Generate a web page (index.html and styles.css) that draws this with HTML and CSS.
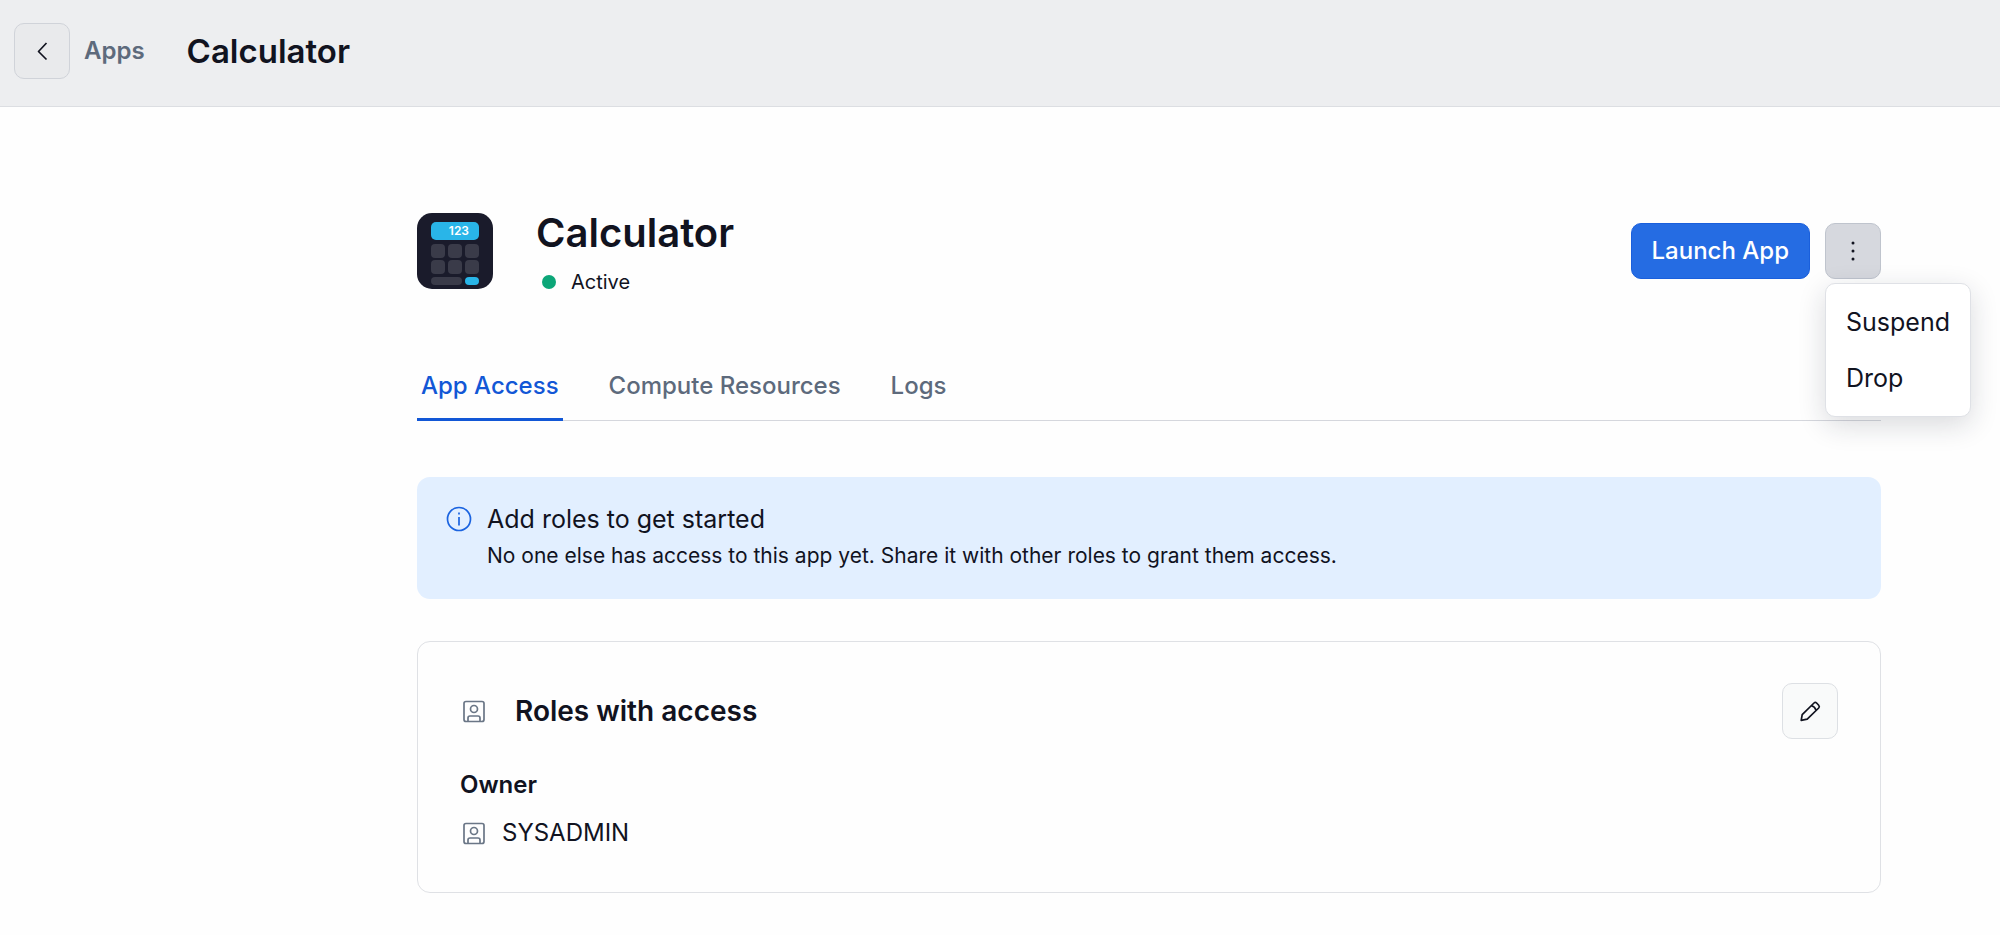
FILE: index.html
```html
<!DOCTYPE html>
<html lang="en">
<head>
    <meta charset="UTF-8">
    <meta name="viewport" content="width=device-width, initial-scale=1.0">
    <title>Calculator - Apps</title>
    <link rel="stylesheet" href="styles.css">
</head>
<body>

    <!-- Top bar -->
    <header class="topbar">
        <button type="button" class="icon-button back-button" aria-label="Back">
            <svg width="24" height="24" viewBox="0 0 24 24"><path d="M16.500 4L8.500 12.500L16.500 20.500" /></svg>
        </button>
        <a href="#" class="breadcrumb">Apps</a>
        <div class="topbar-title">Calculator</div>
    </header>

    <main class="content">

        <!-- App heading -->
        <section class="app-header">
            <svg class="app-logo" viewBox="0 0 76 76" aria-hidden="true">
                <rect width="76" height="76" rx="15" fill="#1a1b2b" />
                <rect x="14" y="9" width="48" height="18" rx="5" fill="#29b5e8" />
                <text x="52" y="22" text-anchor="end" class="logo-text">123</text>
                <g fill="#3a3b49">
                    <rect x="14" y="31" width="14" height="14" rx="4" />
                    <rect x="31" y="31" width="14" height="14" rx="4" />
                    <rect x="48" y="31" width="14" height="14" rx="4" />
                    <rect x="14" y="47" width="14" height="14" rx="4" />
                    <rect x="31" y="47" width="14" height="14" rx="4" />
                    <rect x="48" y="47" width="14" height="14" rx="4" />
                    <rect x="14" y="64" width="31" height="8" rx="4" />
                </g>
                <rect x="48" y="64" width="14" height="8" rx="4" fill="#29b5e8" />
            </svg>
            <div class="app-info">
                <h1>Calculator</h1>
                <p class="status"><span class="status-dot"></span>Active</p>
            </div>
            <div class="app-actions">
                <button type="button" class="launch-button">Launch App</button>
                <div class="menu-wrap">
                    <button type="button" class="icon-button more-button" aria-label="More options" aria-expanded="true">
                        <svg width="24" height="24" viewBox="0 0 24 24">
                            <circle cx="12" cy="4" r="1.500" />
                            <circle cx="12" cy="12" r="1.500" />
                            <circle cx="12" cy="20" r="1.500" />
                        </svg>
                    </button>
                    <div class="menu">
                        <button type="button">Suspend</button>
                        <button type="button">Drop</button>
                    </div>
                </div>
            </div>
        </section>

        <!-- Tabs -->
        <nav class="tabs">
            <a href="#access" class="active">App Access</a>
            <a href="#compute">Compute Resources</a>
            <a href="#logs">Logs</a>
        </nav>

        <!-- Info banner -->
        <section class="banner">
            <svg class="banner-icon" width="26" height="26" viewBox="0 0 26 26">
                <circle cx="13" cy="13" r="11.500" />
                <path d="M13 11V19.500M13 6.500V8.500" />
            </svg>
            <div>
                <h2>Add roles to get started</h2>
                <p>No one else has access to this app yet. Share it with other roles to grant them access.</p>
            </div>
        </section>

        <!-- Roles -->
        <section class="card">
            <div class="card-header">
                <svg class="role-icon" width="26" height="26" viewBox="0 0 26 26">
                    <rect x="4" y="3.500" width="20" height="20" rx="2" />
                    <circle cx="14" cy="11" r="3.500" />
                    <path d="M8 23.500V20Q8 18 10 18H18Q20 18 20 20V23.500" />
                </svg>
                <h2>Roles with access</h2>
                <button type="button" class="icon-button edit-button" aria-label="Edit roles">
                    <svg width="24" height="24" viewBox="0 0 24 24">
                        <path d="M3.200 21.300L4.200 15.600L16 4Q17.300 2.800 18.600 4L20.700 6.300Q21.900 7.700 20.700 9L9.200 20.200ZM13.400 6.600Q16.600 7.300 18.100 11.300" />
                    </svg>
                </button>
            </div>
            <h3>Owner</h3>
            <div class="role">
                <svg class="role-icon" width="26" height="26" viewBox="0 0 26 26">
                    <rect x="4" y="3.500" width="20" height="20" rx="2" />
                    <circle cx="14" cy="11" r="3.500" />
                    <path d="M8 23.500V20Q8 18 10 18H18Q20 18 20 20V23.500" />
                </svg>
                <span>SYSADMIN</span>
            </div>
        </section>

    </main>

</body>
</html>
```
FILE: styles.css
```css
* {
    box-sizing: border-box;
}

body {
    margin: 0;
    font-family: Inter, sans-serif;
    font-size: 24px;
    line-height: 32px;
    color: #11131f;
    background-color: #fefefe;
}

h1, h2, h3, p {
    margin: 0;
}

a {
    text-decoration: none;
}

button {
    font: inherit;
    color: inherit;
    cursor: pointer;
}

svg {
    display: block;
    flex-shrink: 0;
}

/* Top bar */
.topbar {
    display: flex;
    align-items: center;
    padding: 23px 14px 27px;
    background-color: #edeef0;
    border-bottom: 1px solid #dcdee2;
}

.icon-button {
    display: flex;
    align-items: center;
    justify-content: center;
    width: 56px;
    height: 56px;
    padding: 0;
    border: 1px solid #d0d3d9;
    border-radius: 10px;
}

.icon-button svg {
    fill: none;
    stroke: #11131f;
    stroke-width: 1.7;
    stroke-linejoin: round;
}

.back-button {
    background-color: #e9eaec;
}

.breadcrumb {
    margin-left: 14px;
    color: #5d6a7c;
    font-weight: 600;
}

.topbar-title {
    margin-left: 42px;
    font-size: 33px;
    font-weight: 600;
}

/* Content */
.content {
    margin: 96px 119px 42px 417px;
}

.app-header {
    display: flex;
    align-items: center;
}

.app-logo {
    width: 76px;
    height: 76px;
}

.logo-text {
    fill: #ffffff;
    font-size: 12px;
    font-weight: 600;
}

.app-info {
    margin-left: 43px;
    padding-top: 4px;
}

.app-info h1 {
    font-size: 40px;
    font-weight: 600;
    line-height: 52px;
}

.status {
    display: flex;
    align-items: center;
    margin-top: 7px;
    padding-left: 6px;
    font-size: 20px;
}

.status-dot {
    width: 14px;
    height: 14px;
    margin-right: 15px;
    border-radius: 50%;
    background-color: #0ca678;
}

.app-actions {
    display: flex;
    gap: 15px;
    margin-left: auto;
}

.launch-button {
    height: 56px;
    padding: 0 20px;
    border: 1px solid #1a5fdc;
    border-radius: 10px;
    background-color: #256ce3;
    color: #ffffff;
    font-weight: 500;
}

.menu-wrap {
    position: relative;
}

.more-button {
    background-color: #d6d8de;
    border-color: #bfc4cd;
}

.more-button svg {
    fill: #11131f;
    stroke: none;
}

.menu {
    position: absolute;
    top: 60px;
    left: 0;
    z-index: 1;
    padding: 10px 0;
    border: 1px solid #dfe1e6;
    border-radius: 10px;
    background-color: #ffffff;
    box-shadow: 0 8px 28px rgba(25, 30, 50, 0.16);
}

.menu button {
    display: block;
    width: 100%;
    height: 56px;
    padding: 0 20px;
    border: none;
    background: none;
    font-size: 25px;
    text-align: left;
}

/* Tabs */
.tabs {
    display: flex;
    gap: 42px;
    margin-top: 72px;
    border-bottom: 1px solid #d5d7dd;
}

.tabs a {
    margin-bottom: -1px;
    padding: 0 4px 16px;
    border-bottom: 3px solid transparent;
    color: #5d6a7c;
    font-weight: 500;
}

.tabs a.active {
    color: #1257d6;
    border-bottom-color: #1257d6;
}

/* Banner */
.banner {
    display: flex;
    gap: 15px;
    margin-top: 56px;
    padding: 26px 29px 27px;
    border-radius: 13px;
    background-color: #e2efff;
}

.banner-icon {
    margin-top: 3px;
    fill: none;
    stroke: #1a63e0;
    stroke-width: 1.7;
}

.banner h2 {
    font-size: 25px;
    font-weight: 400;
}

.banner p {
    margin-top: 5px;
    font-size: 21px;
}

/* Roles card */
.card {
    margin-top: 42px;
    padding: 41px 42px 43px;
    border: 1px solid #dfe1e5;
    border-radius: 13px;
}

.card-header {
    display: flex;
    align-items: center;
}

.role-icon {
    fill: none;
    stroke: #6a7686;
    stroke-width: 1.7;
}

.card-header h2 {
    margin-left: 29px;
    font-size: 28px;
    font-weight: 600;
}

.edit-button {
    margin-left: auto;
    background-color: #f9fafa;
    border-color: #dde0e4;
}

.card h3 {
    margin-top: 30px;
    font-size: 24px;
    font-weight: 600;
}

.role {
    display: flex;
    align-items: center;
    gap: 16px;
    margin-top: 16px;
}
```
